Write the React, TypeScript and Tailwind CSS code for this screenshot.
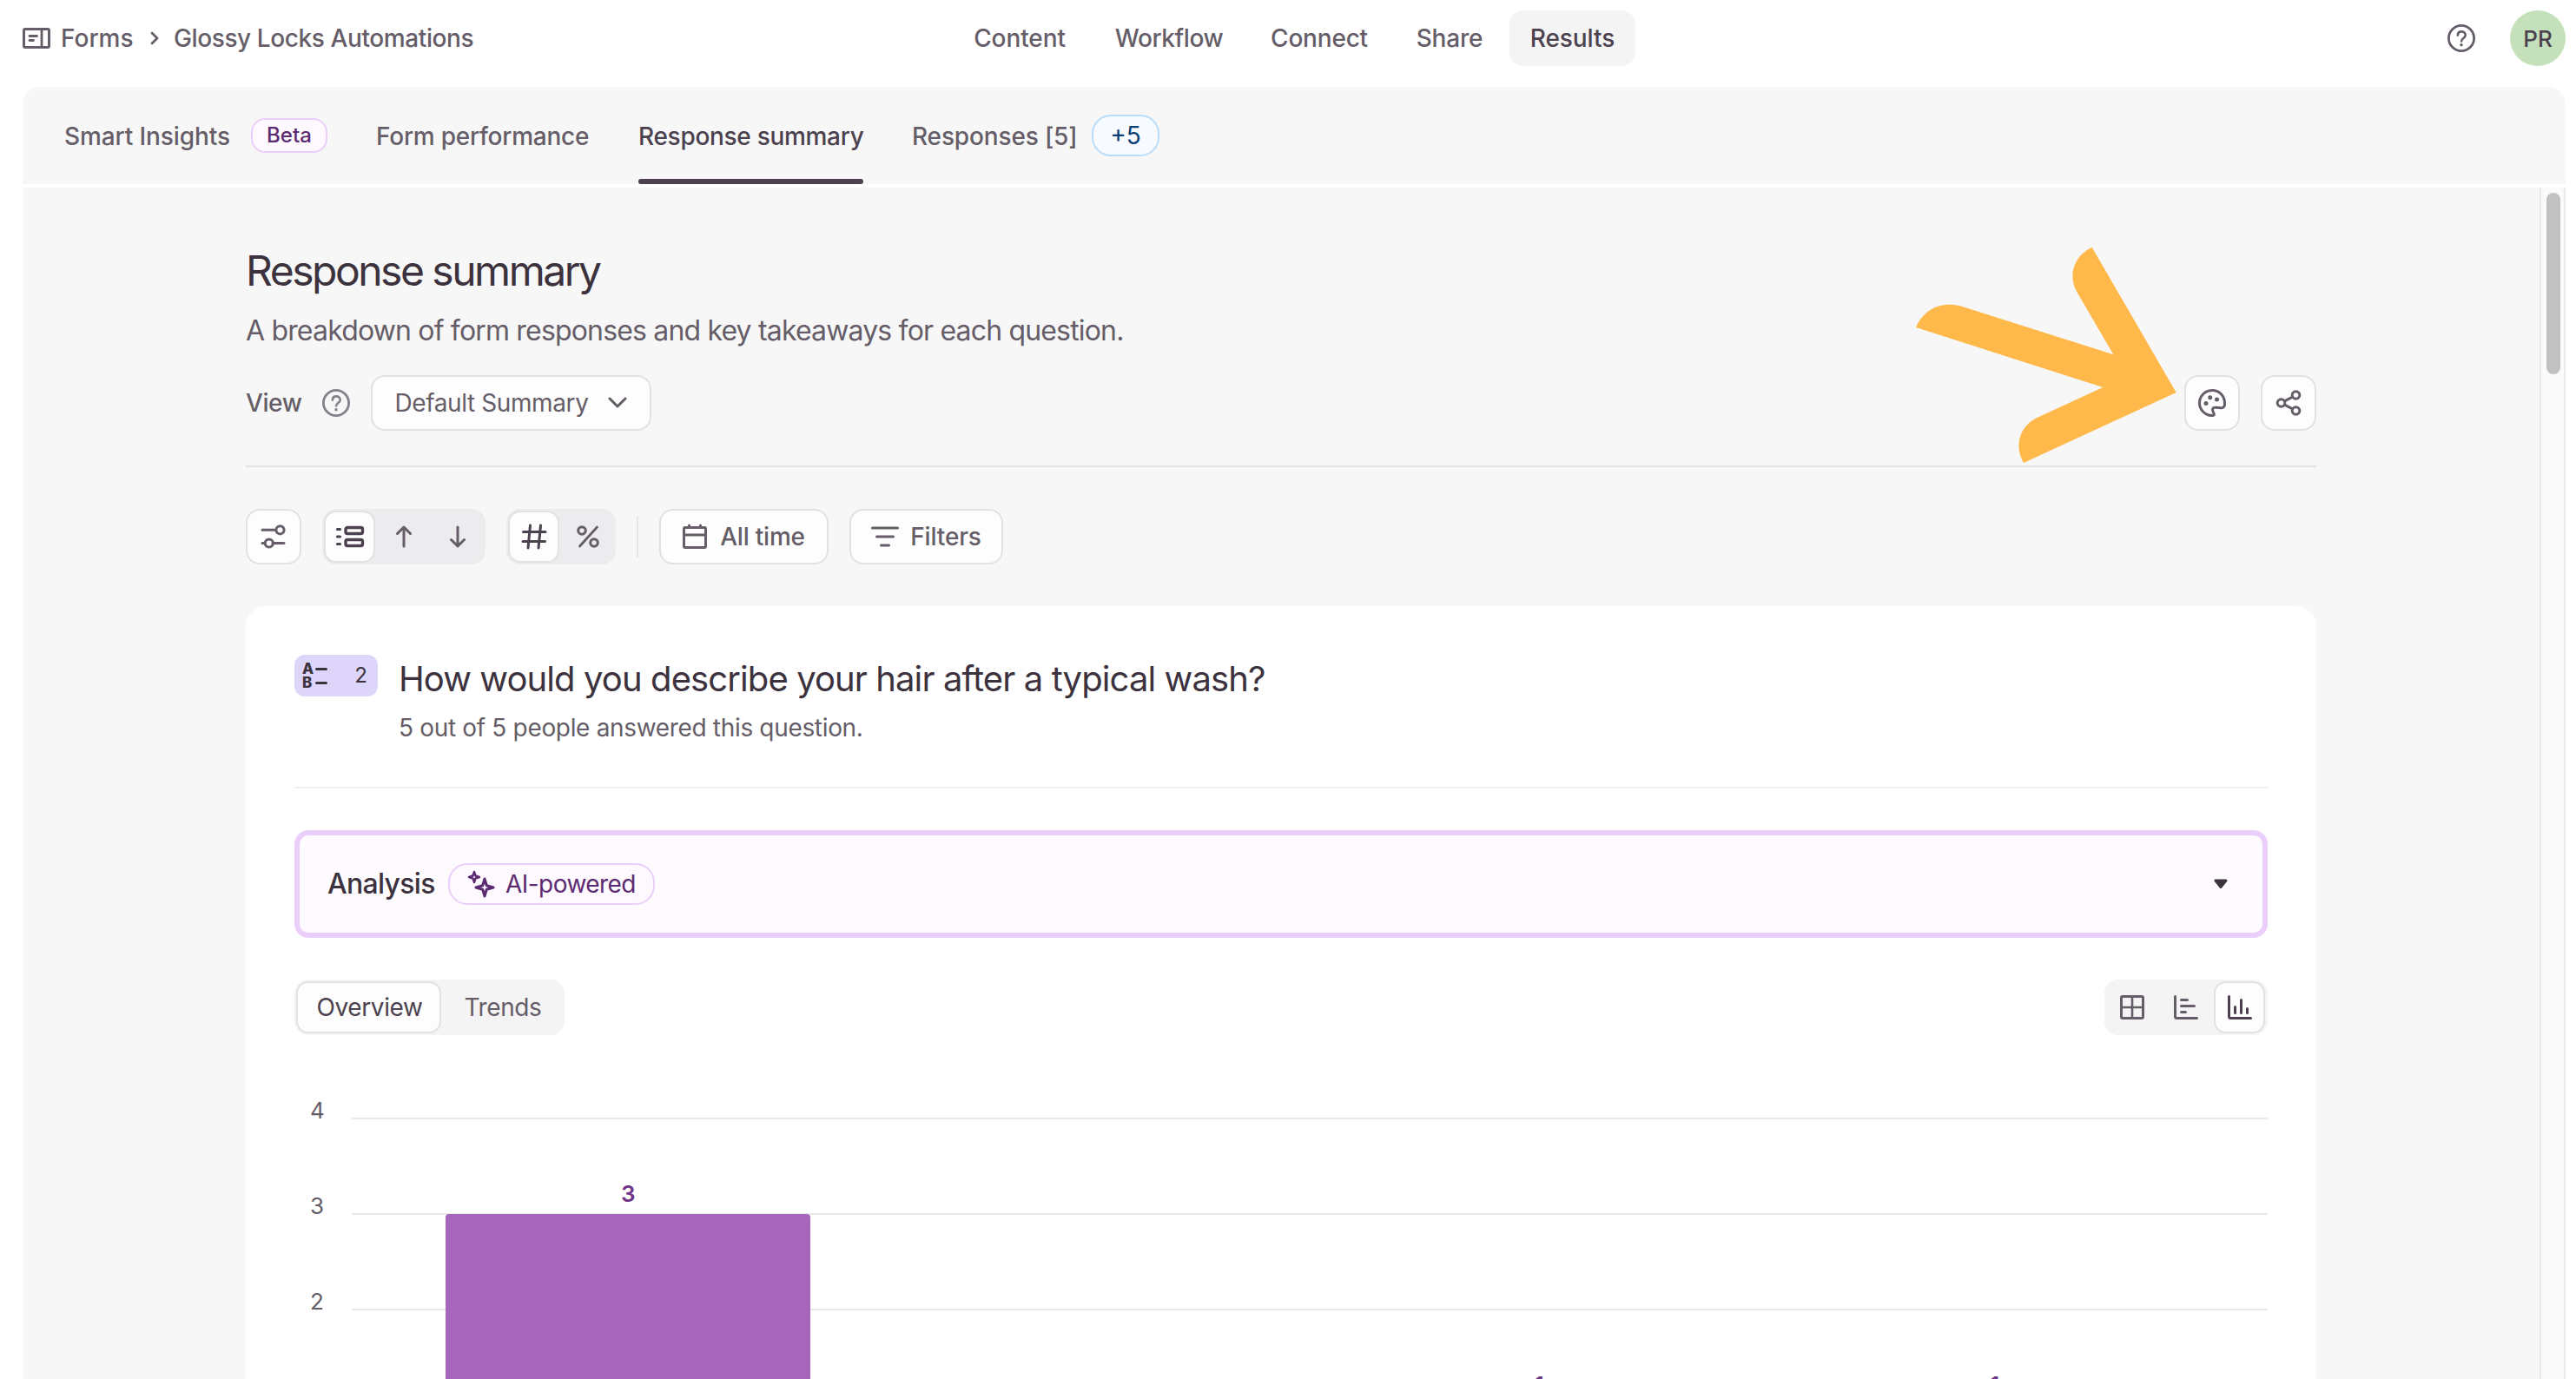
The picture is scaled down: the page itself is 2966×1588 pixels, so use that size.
import React from 'react';

type IconProps = {
    w: number;
    h: number;
    className?: string;
    children: React.ReactNode;
};

const Icon: React.FC<IconProps> = ({ w, h, className = '', children }) => (
    <svg
        width={w}
        height={h}
        viewBox={`0 0 ${w} ${h}`}
        fill="none"
        stroke="currentColor"
        strokeWidth={3}
        strokeLinecap="round"
        strokeLinejoin="round"
        className={`shrink-0 ${className}`}
    >
        {children}
    </svg>
);

const HelpIcon: React.FC<{ className?: string }> = ({ className }) => (
    <Icon w={32} h={32} className={className}>
        <circle cx="16" cy="16" r="14.6" strokeWidth="2.8" />
        <path d="M11.8 12.6C12 10 13.8 8.4 16.2 8.4c2.6 0 4.5 1.7 4.5 4 0 3.6-4.6 3.6-4.6 7" strokeWidth="2.6" />
        <circle cx="16" cy="23.8" r="1.7" fill="currentColor" stroke="none" />
    </Icon>
);

const navItems = [
    { label: 'Content', className: 'w-[164px] tracking-[-0.1px]' },
    { label: 'Workflow', className: 'w-[180px] tracking-[-0.4px]' },
    { label: 'Connect', className: 'w-[166px] tracking-[-0.2px]' },
    { label: 'Share', className: 'w-[134px] tracking-[-0.2px]' },
];

const Header: React.FC = () => (
    <header className="flex h-[88px] shrink-0 items-center pl-[26px] pr-3 text-[28px] font-medium text-[#655d67]">
        <div className="flex w-[1066px] items-center">
            <Icon w={32} h={24}>
                <rect x="1.5" y="1.5" width="29" height="21" rx="1.5" />
                <path d="M22 2v20M8 9.5h8.5M8 14.5h4.5" strokeWidth="2.8" />
            </Icon>
            <span className="ml-3 w-[103px]">Forms</span>
            <Icon w={10} h={16} className="mr-[17px]">
                <path d="M2 2l6 6-6 6" strokeWidth="2.8" />
            </Icon>
            <span className="tracking-[-0.4px]">Glossy Locks Automations</span>
        </div>
        <nav className="flex items-center">
            {navItems.map((item) => (
                <span key={item.label} className={`${item.className} text-center`}>
                    {item.label}
                </span>
            ))}
            <span className="ml-0.5 flex h-16 w-[145px] items-center justify-center rounded-2xl bg-[#f4f4f4] tracking-[-0.1px] text-[#4c414e]">
                Results
            </span>
        </nav>
        <HelpIcon className="ml-auto mr-10" />
        <div className="flex size-16 items-center justify-center rounded-full bg-[#c4e1bb] text-[26px] text-[#4c414e]">PR</div>
    </header>
);

const Tabs: React.FC = () => (
    <div className="flex h-28 shrink-0 items-center rounded-t-[20px] bg-[#f7f7f7] pl-12 text-[28px] font-medium text-[#655d67]">
        <span className="w-[215px] pt-px tracking-[-0.1px]">Smart Insights</span>
        <span className="flex h-10 w-[88px] items-center justify-center rounded-2xl border-2 border-[#ebcffb] bg-[#fdf9fe] text-2xl text-[#5c2a70]">
            Beta
        </span>
        <span className="ml-14 w-[302px] pt-px tracking-[-0.25px]">Form performance</span>
        <span className="flex h-full w-[259px] flex-col text-[#4c414e]">
            <span className="flex flex-1 items-center pt-2 tracking-[-0.3px]">Response summary</span>
            <span className="h-1.5 rounded-full bg-[#4c414e]" />
        </span>
        <span className="ml-14 w-[207px] pt-px tracking-[-0.15px]">Responses [5]</span>
        <span className="flex h-12 w-[78px] items-center justify-center rounded-[22px] border-2 border-[#b8dcfa] bg-[#f7fbff] font-normal text-[#0b4074]">
            +5
        </span>
    </div>
);

const button = 'flex h-16 items-center justify-center rounded-2xl border-2 border-[#e2e2e2] bg-[#fdfdfd] text-[#655d67]';
const selected = 'flex h-[60px] items-center justify-center rounded-[14px] border-2 border-[#e2e2e2] bg-[#fdfdfd] text-[#4c414e]';

const PointerArrow: React.FC = () => (
    <svg
        viewBox="0 0 900 750"
        className="absolute -top-[148px] left-[1923px] h-[250px] w-[300px]"
        fill="#ffb94b"
    >
        <path d="M0 279C28 213 92 186 160 207L682 373L557 158C523 99 545 32 608 2L899 504L372 747C338 690 358 620 417 592L646 486Z" />
    </svg>
);

const PageHeading: React.FC = () => (
    <section>
        <h1 className="text-5xl leading-[60px] text-[#3c323e] tracking-[-2.5px]">Response summary</h1>
        <p className="mt-[19px] text-[32px] leading-10 text-[#655d67] tracking-[-0.83px]">
            A breakdown of form responses and key takeaways for each question.
        </p>
        <div className="relative mt-[31px] flex h-16 items-center text-[28px] text-[#655d67]">
            <span className="w-[88px] font-medium tracking-[-0.4px]">View</span>
            <HelpIcon className="text-[#86808a]" />
            <div className={`${button} ml-6 w-[323px]`}>
                <span className="mr-[23px] tracking-[-0.4px]">Default Summary</span>
                <Icon w={22} h={14}>
                    <path d="M2 2l9 9 9-9" />
                </Icon>
            </div>
            <PointerArrow />
            <div className={`${button} mr-6 ml-auto w-16`}>
                <Icon w={32} h={32}>
                    <path d="M16 1.5A14.5 14.5 0 0 0 16 30.5c1.6.1 2.6-.6 2.2-2C17.6 26.7 16.2 25.5 16.6 23.2 17 21.2 19 21.2 20.5 21.3L26 21.8c2.6.2 4.5-1.3 4.500-4C31 8 24.500 1.500 16 1.500Z" />
                    <circle cx="13.700" cy="9.700" r="2.500" fill="currentColor" stroke="none" />
                    <circle cx="21.500" cy="12" r="2.500" fill="currentColor" stroke="none" />
                    <circle cx="9" cy="16.500" r="2.500" fill="currentColor" stroke="none" />
                </Icon>
            </div>
            <div className={`${button} w-16`}>
                <Icon w={30} h={30}>
                    <circle cx="6.500" cy="15" r="4.300" />
                    <circle cx="23.500" cy="6" r="4.300" />
                    <circle cx="23.500" cy="24" r="4.300" />
                    <path d="M10.500 12.800l9-4.700M10.500 17.200l9 4.700" />
                </Icon>
            </div>
        </div>
        <hr className="mt-10 border-t-2 border-[#e2e2e2]" />
    </section>
);

const Toolbar: React.FC = () => (
    <div className="mt-12 flex h-16 items-center text-[28px] font-medium text-[#655d67]">
        <div className={`${button} w-16`}>
            <Icon w={30} h={28}>
                <path d="M2 6.300h14M14 21.500h13M2 21.500h3" />
                <circle cx="22.500" cy="6.300" r="4.600" />
                <circle cx="9.800" cy="21.500" r="4.600" />
            </Icon>
        </div>
        <div className="ml-6 flex h-16 w-[188px] items-center rounded-2xl bg-[#ececee] pl-0.5">
            <div className={`${selected} w-[59px]`}>
                <Icon w={34} h={26}>
                    <path d="M2.500 4.500h3M2.500 13h3M2.500 21.500h3" strokeWidth="3.200" />
                    <rect x="12" y="2.500" width="19.500" height="7" rx="2" strokeWidth="3.400" />
                    <rect x="12" y="16.500" width="19.500" height="7" rx="2" strokeWidth="3.400" />
                </Icon>
            </div>
            <Icon w={20} h={26} className="ml-[23px]">
                <path d="M10 24V2M2.500 9.500L10 2l7.500 7.500" />
            </Icon>
            <Icon w={20} h={26} className="ml-[42px]">
                <path d="M10 2v22M2.500 16.500L10 24l7.500-7.500" />
            </Icon>
        </div>
        <div className="ml-6 flex h-16 w-[126px] items-center rounded-2xl bg-[#ececee] pl-0.5">
            <div className={`${selected} w-[59px]`}>
                <Icon w={30} h={30}>
                    <path d="M10.500 2L8 28M22.500 2L20 28M2.500 9.500h25.500M2 20.500h25.500" />
                </Icon>
            </div>
            <Icon w={28} h={28} className="ml-[19px]">
                <circle cx="7" cy="7" r="4.300" />
                <circle cx="21" cy="21" r="4.300" />
                <path d="M24.500 3L4.500 25" strokeWidth="2.800" />
            </Icon>
        </div>
        <div className="mx-6 h-12 w-0.5 bg-[#e6e6e6]" />
        <div className={`${button} w-[195px]`}>
            <Icon w={28} h={30} className="mr-[15px]">
                <rect x="1.500" y="4.500" width="25" height="23" rx="1.500" />
                <path d="M2 13h24M7.500 2v2M20.500 2v2" />
            </Icon>
            <span className="tracking-[-0.2px]">All time</span>
        </div>
        <div className={`${button} ml-6 w-[177px]`}>
            <Icon w={32} h={24} className="mr-[13px]">
                <path d="M1.500 2h29M6.500 12h19M11.500 22h9" />
            </Icon>
            <span className="tracking-[-0.15px]">Filters</span>
        </div>
    </div>
);

const QuestionHeader: React.FC = () => (
    <div className="flex h-[154px] border-b-2 border-[#f0f0f0]">
        <div className="flex h-12 w-24 items-center rounded-xl bg-[#ddd5fa] text-[#3c323e]">
            <div className="ml-[9px] flex flex-col text-[17px] leading-4 font-extrabold">
                <span className="flex items-center gap-[3px]">
                    <span className="w-3">A</span>
                    <span className="h-[3px] w-[14px] rounded-full bg-[#3c323e]" />
                </span>
                <span className="flex items-center gap-[3px]">
                    <span className="w-3">B</span>
                    <span className="h-[3px] w-[14px] rounded-full bg-[#3c323e]" />
                </span>
            </div>
            <span className="ml-auto mr-3 text-2xl">2</span>
        </div>
        <div className="ml-6">
            <h2 className="mt-1 text-[40px] leading-[48px] text-[#3c323e] tracking-[-0.9px]">
                How would you describe your hair after a typical wash?
            </h2>
            <p className="mt-3 text-[28px] leading-10 text-[#655d67] tracking-[-0.33px]">
                5 out of 5 people answered this question.
            </p>
        </div>
    </div>
);

const Analysis: React.FC = () => (
    <div className="mt-12 flex h-[124px] items-center rounded-2xl border-[6px] border-[#ebcffb] bg-[#fdfbfe] px-8">
        <span className="w-[139px] text-[32px] font-medium text-[#3c323e] tracking-[-0.7px]">Analysis</span>
        <span className="flex h-12 w-[238px] items-center rounded-[22px] border-2 border-[#ebcffb] bg-[#fdf9fe] pl-5 text-[28px] text-[#5c2a70] tracking-[-0.55px]">
            <Icon w={32} h={32} className="mr-3">
                <path d="M8 2l1.500 4.500L14 8l-4.500 1.500L8 14l-1.500-4.500L2 8l4.500-1.500Z" strokeWidth="2.400" />
                <path d="M20 10l2.300 7.700L30 20l-7.700 2.300L20 30l-2.300-7.700L10 20l7.700-2.300Z" />
            </Icon>
            AI-powered
        </span>
        <Icon w={16} h={12} className="mr-2 ml-auto text-[#3c323e]">
            <path d="M2 2h12L8 9.500Z" fill="currentColor" />
        </Icon>
    </div>
);

const ChartSwitcher: React.FC = () => (
    <div className="mt-12 flex h-16 justify-between text-[28px] text-[#655d67] tracking-[-0.4px]">
        <div className="flex w-[311px] items-center rounded-2xl bg-[#f4f4f4] pl-0.5">
            <div className={`${selected} w-[167px] pl-0.5`}>Overview</div>
            <span className="flex-1 text-center">Trends</span>
        </div>
        <div className="flex w-[188px] items-center rounded-2xl bg-[#f4f4f4] pl-[18px]">
            <Icon w={28} h={28}>
                <rect x="1.500" y="1.500" width="25" height="25" rx="1.500" />
                <path d="M14 2v24M2 14h24" strokeWidth="2.600" />
            </Icon>
            <Icon w={28} h={28} className="ml-[34px]">
                <path d="M1.500 1.500v23q0 2 2 2h23M8.500 5.500h7M8.500 12.500h15M8.500 19.500h5" />
            </Icon>
            <div className={`${selected} ml-[18px] w-[59px]`}>
                <Icon w={28} h={28}>
                    <path d="M1.500 1.500v23q0 2 2 2h23M8.500 13.500v7M15.500 5.500v15M22.500 15.500v5" />
                </Icon>
            </div>
        </div>
    </div>
);

const bars = [3, 0, 1, 1];
const ticks = [4, 3, 2];
const STEP = 110;

const Chart: React.FC = () => (
    <div className="relative mt-[95px] h-[440px]">
        {ticks.map((tick) => (
            <div key={tick} className="flex h-[110px] items-start">
                <span className="-mt-[23px] w-[66px] pl-[18px] text-[26px] leading-[30px] text-[#655d67]">{tick}</span>
                <span className="h-0.5 flex-1 bg-[#e9e9e9]" />
            </div>
        ))}
        {/* bars sit on top of the grid */}
        <div className="absolute top-0 left-[122px] flex h-[441px] w-[2098px] items-end">
            {bars.map((value, i) => (
                <div key={i} className="flex flex-1 flex-col items-center">
                    {value > 0 && (
                        <>
                            <span className="mb-2 text-[26px] leading-[31px] font-semibold text-[#6f3488]">{value}</span>
                            <div className="w-[420px] rounded-t bg-[#a566bb]" style={{ height: value * STEP }} />
                        </>
                    )}
                </div>
            ))}
        </div>
    </div>
);

const App: React.FC = () => (
    <div className="flex h-[1588px] w-full flex-col overflow-hidden bg-white font-['Inter',sans-serif] whitespace-nowrap">
        <Header />
        <main className="mt-3 mr-3 ml-[26px] flex min-h-0 flex-1 flex-col">
            <Tabs />
            <div className="mt-1 flex min-h-0 flex-1 bg-[#f7f7f7]">
                <div className="ml-[257px] w-[2384px] pt-[66px]">
                    <PageHeading />
                    <Toolbar />
                    <section className="mt-12 rounded-3xl bg-white px-14 pt-14">
                        <QuestionHeader />
                        <Analysis />
                        <ChartSwitcher />
                        <Chart />
                    </section>
                </div>
                <div className="ml-auto w-[30px] border-x-2 border-[#e8e8e8] bg-[#fafafa] pt-1.5 pl-1.5">
                    <div className="h-[209px] w-4 rounded-full bg-[#c1c1c1]" />
                </div>
            </div>
        </main>
    </div>
);

export default App;
